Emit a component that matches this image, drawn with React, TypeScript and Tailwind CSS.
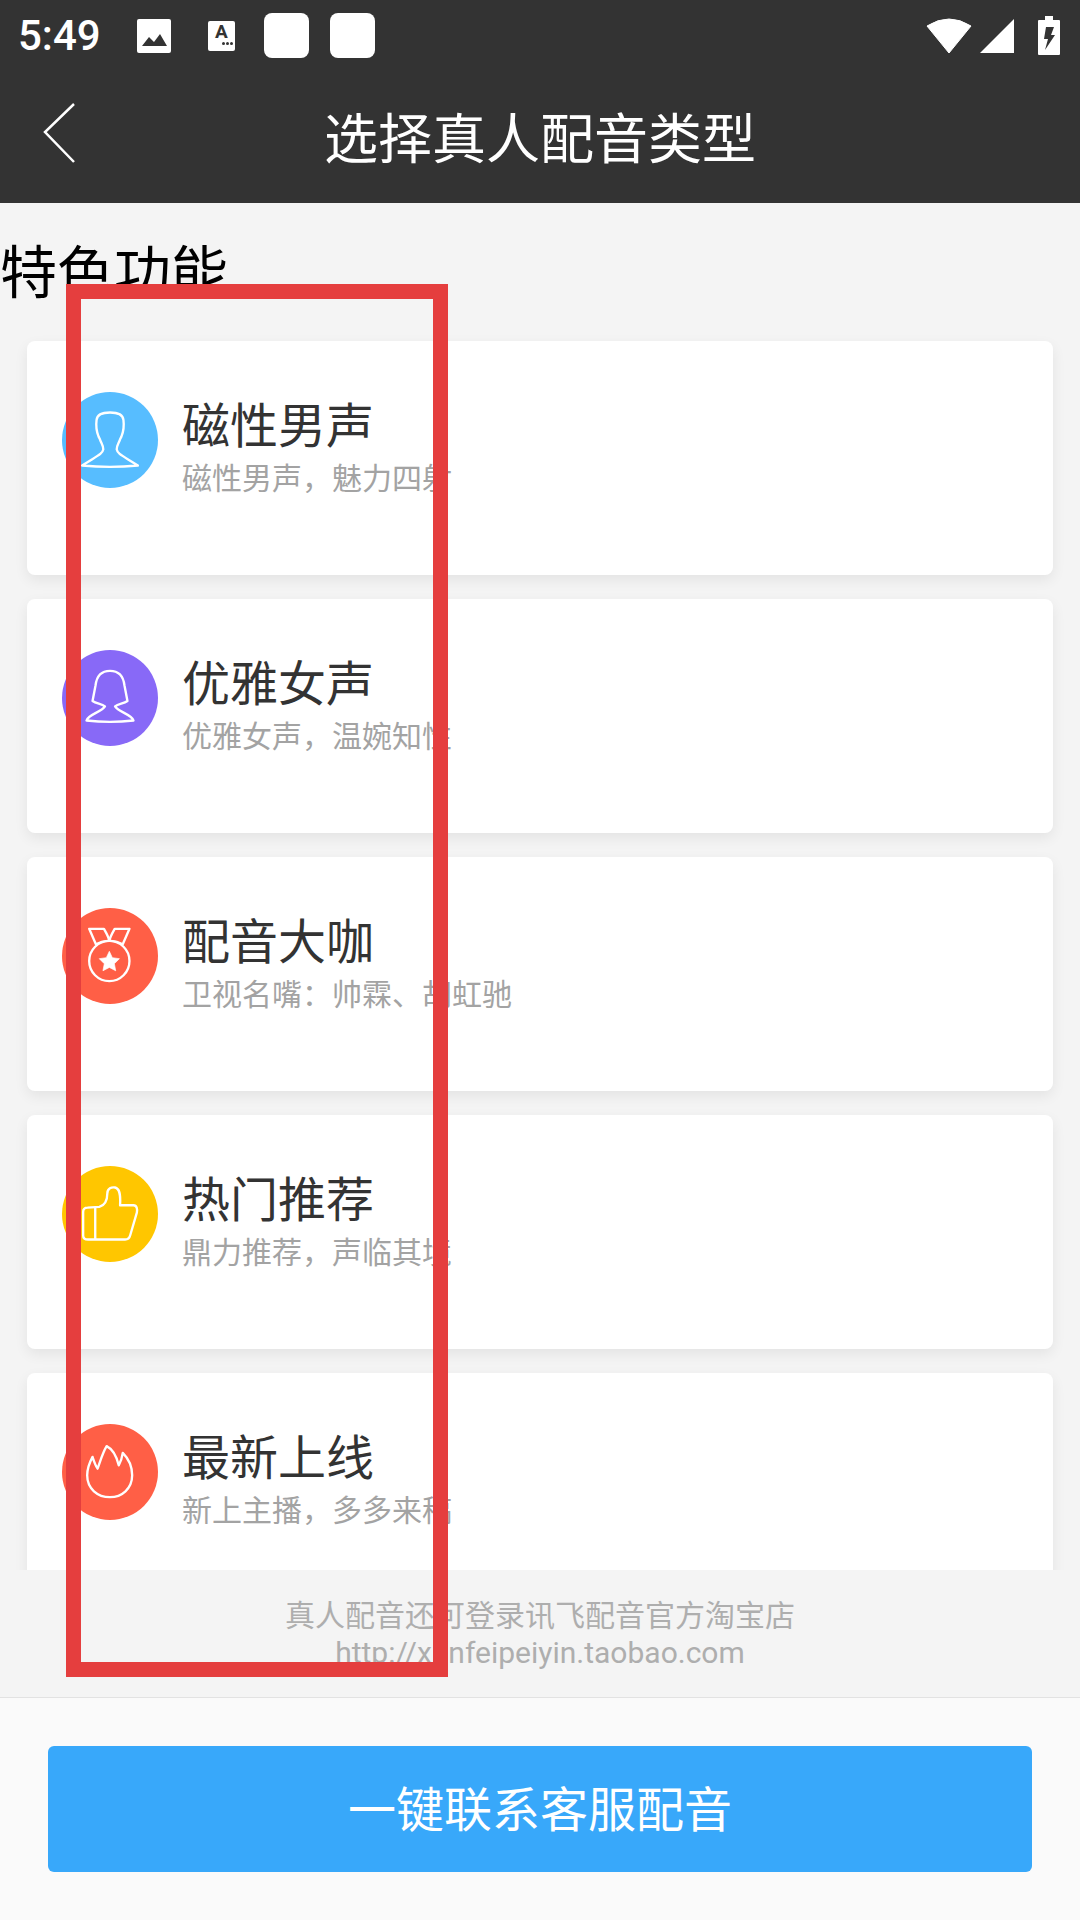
import { ReactNode } from "react";

const cjk = "font-['Noto_Sans_CJK_SC','Noto_Sans',sans-serif]";

const ManIcon = () => (
    <svg viewBox="37 37 286 286" className="w-full h-full" fill="none" stroke="white" strokeWidth="7" strokeLinejoin="round">
        <path d="M180 98 C160 98 142 102 140 120 C138 135 140 155 146 170 L150 178 C154 190 160 195 160 208 C158 222 140 228 97 256 Q180 264 263 256 C220 228 202 222 200 208 C200 195 206 190 210 178 L214 170 C220 155 222 135 220 120 C218 102 200 98 180 98 Z" />
    </svg>
);

const WomanIcon = () => (
    <svg viewBox="37 30 286 286" className="w-full h-full" fill="none" stroke="white" strokeWidth="7" strokeLinejoin="round">
        <path d="M180 92 C150 92 140 110 137 135 L128 182 C140 190 155 190 165 198 C155 215 115 222 110 240 Q180 248 250 240 C245 222 205 215 195 198 C205 190 220 190 232 182 L223 135 C220 110 210 92 180 92 Z" />
    </svg>
);

const MedalIcon = () => (
    <svg viewBox="37 39 286 286" className="w-full h-full" fill="none" stroke="white" strokeWidth="7" strokeLinejoin="round">
        <circle cx="178" cy="197" r="60" />
        <path d="M118 101 L162 101 C170 115 176 125 178 137 C165 136 150 140 138 147 Z" />
        <path d="M238 101 L194 101 C186 115 180 125 178 137 C191 136 206 140 218 147 Z" />
        <path
            d="M178 168 L187 187 L208 190 L193 205 L197 226 L178 216 L159 226 L163 205 L148 190 L169 187 Z"
            fill="white"
            strokeWidth="2"
        />
    </svg>
);

const ThumbIcon = () => (
    <svg viewBox="37 33 286 286" className="w-full h-full" fill="none" stroke="white" strokeWidth="7" strokeLinejoin="round">
        <path d="M100 170 Q100 157 113 157 L148 155 C165 150 172 135 172 115 C172 100 185 95 195 97 C208 100 212 115 210 150 L250 150 C260 150 262 162 260 172 L240 240 Q237 252 225 252 L115 252 Q100 252 100 240 Z" />
        <path d="M136 158 L136 252" />
    </svg>
);

const FlameIcon = () => (
    <svg viewBox="37 42 286 286" className="w-full h-full" fill="none" stroke="white" strokeWidth="7" strokeLinejoin="round">
        <path d="M170 108 C190 118 200 140 206 165 C212 155 216 142 218 128 C235 145 246 170 246 195 C246 235 215 260 180 260 C143 260 112 235 112 195 C112 175 120 155 128 140 C132 152 136 165 143 175 C152 150 158 128 170 108 Z" />
    </svg>
);

type Item = { title: string; desc: string; color: string; icon: ReactNode };

const items: Item[] = [
    { title: "磁性男声", desc: "磁性男声，魅力四射", color: "bg-[#57bdff]", icon: <ManIcon /> },
    { title: "优雅女声", desc: "优雅女声，温婉知性", color: "bg-[#8869f7]", icon: <WomanIcon /> },
    { title: "配音大咖", desc: "卫视名嘴：帅霖、胡虹驰", color: "bg-[#ff5f46]", icon: <MedalIcon /> },
    { title: "热门推荐", desc: "鼎力推荐，声临其境", color: "bg-[#ffc600]", icon: <ThumbIcon /> },
    { title: "最新上线", desc: "新上主播，多多来稿", color: "bg-[#ff5f46]", icon: <FlameIcon /> },
];

function StatusBar() {
    return (
        <div className="h-[68px] flex items-center pl-[18px] pt-[3px] text-white">
            <span className="w-[119px] text-[42px] leading-[68px] font-medium font-['Roboto',sans-serif] mt-[1px]">5:49</span>
            <svg viewBox="0 0 34 34" className="w-[34px] h-[34px] mr-[37px]">
                <rect width="34" height="34" rx="2" fill="white" />
                <path d="M5 27 L12 18 L17 23 L23 15 L30 27 Z" fill="#333333" />
            </svg>
            <div className="w-[27px] h-[30px] mr-[29px] bg-white rounded-[2px] flex flex-col items-center text-[#333333]">
                <span className="text-[19px] leading-[21px] font-bold font-['Roboto',sans-serif]">A</span>
                <div className="flex gap-[1px] self-end pr-[2px]">
                    <div className="w-[3px] h-[3px] rounded-full bg-[#333333]" />
                    <div className="w-[3px] h-[3px] rounded-full bg-[#333333]" />
                    <div className="w-[3px] h-[3px] rounded-full bg-[#333333]" />
                </div>
            </div>
            <div className="w-[45px] h-[45px] mr-[21px] bg-white rounded-[8px]" />
            <div className="w-[45px] h-[45px] bg-white rounded-[8px]" />
            <div className="flex-1" />
            <svg viewBox="0 0 46 36" className="w-[46px] h-[36px] mr-[8px] mb-[2px]">
                <path d="M1 9 Q23 -5 45 9 L23 36 Z" fill="white" stroke="white" strokeWidth="1" strokeLinejoin="round" />
            </svg>
            <svg viewBox="0 0 34 34" className="w-[34px] h-[34px] mr-[24px]">
                <path d="M0 34 L34 0 L34 34 Z" fill="white" />
            </svg>
            <svg viewBox="0 0 22 39" className="w-[22px] h-[39px] mr-[20px]">
                <path
                    d="M7 0 H15 V4 H21 Q22 4 22 5 V38 Q22 39 21 39 H1 Q0 39 0 38 V5 Q0 4 1 4 H7 Z"
                    fill="white"
                />
                <path d="M8 11 H16 L13 19 H17 L7 34 L10 23 H6 Z" fill="#333333" />
            </svg>
        </div>
    );
}

function NavBar() {
    return (
        <div className="h-[135px] relative flex items-start justify-center">
            <svg viewBox="0 0 32 60" className="absolute left-[43px] top-[35px] w-[32px] h-[60px]" fill="none" stroke="white" strokeWidth="2.5">
                <path d="M31 1 L2 29 L31 59" />
            </svg>
            <span className={`${cjk} text-[54px] leading-[68px] mt-[34px] text-white`}>选择真人配音类型</span>
        </div>
    );
}

function Card({ item }: { item: Item }) {
    return (
        <div className="h-[234px] shrink-0 mx-[27px] bg-white rounded-[8px] shadow-[0_5px_14px_rgba(0,0,0,0.07)] flex items-start pt-[51px] pl-[35px] gap-[24px]">
            <div className={`w-[96px] h-[96px] rounded-full ${item.color}`}>{item.icon}</div>
            <div className={`${cjk} flex flex-col`}>
                <span className="text-[48px] leading-[56px] mt-[2px] text-[#333333]">{item.title}</span>
                <span className="text-[30px] leading-[36px] mt-[8px] text-[#a3a3a3]">{item.desc}</span>
            </div>
        </div>
    );
}

export default function App() {
    return (
        <div className="w-[1080px] h-[1920px] relative overflow-hidden flex flex-col bg-[#f4f4f4]">
            <div className="bg-[#333333]">
                <StatusBar />
                <NavBar />
            </div>

            <div className="h-[1367px] overflow-hidden flex flex-col">
                <div className={`${cjk} h-[138px] shrink-0 pt-[33px] text-[57px] leading-[64px] text-black`}>特色功能</div>
                <div className="flex flex-col gap-[24px]">
                    {items.map((item) => (
                        <Card key={item.title} item={item} />
                    ))}
                </div>
            </div>

            <div className="h-[127px] flex flex-col items-center pt-[24px] text-[30px] text-[#aeaeae]">
                <span className={`${cjk} leading-[38px]`}>真人配音还可登录讯飞配音官方淘宝店</span>
                <span className="mt-[2px] leading-[38px] font-['Roboto',sans-serif]">http://xunfeipeiyin.taobao.com</span>
            </div>

            <div className="flex-1 bg-[#fafafa] border-t border-[#e2e2e2] pt-[48px] px-[48px]">
                <div className={`${cjk} h-[126px] pb-[7px] bg-[#38a8fa] rounded-[6px] flex items-center justify-center text-[48px] text-white`}>
                    一键联系客服配音
                </div>
            </div>

            {/* annotation box drawn over the screen */}
            <div className="absolute left-[66px] top-[284px] w-[382px] h-[1393px] border-[15px] border-[#e53e3e]" />
        </div>
    );
}
